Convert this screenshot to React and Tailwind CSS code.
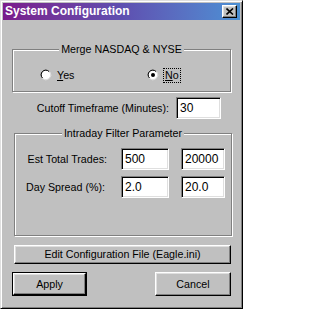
const raised =
  "bg-[#c0c0c0] border border-t-white border-l-white border-r-black border-b-black shadow-[inset_-1px_-1px_0_#808080,inset_1px_1px_0_#dfdfdf]";
const sunken =
  "bg-white border border-t-[#808080] border-l-[#808080] border-r-white border-b-white shadow-[inset_1px_1px_0_#000,inset_-1px_-1px_0_#dfdfdf]";
const etched =
  "relative border border-[#808080] shadow-[inset_1px_1px_0_#fff,1px_1px_0_#fff]";

function Radio({ checked }) {
  return (
    <svg width="12" height="12" viewBox="0 0 12 12" className="shrink-0">
      <path d="M8 1.5A5 5 0 0 0 1.5 8" stroke="#808080" strokeWidth="1" fill="none" />
      <circle cx="6" cy="6" r="4.5" fill="#fff" />
      <path d="M2.5 9.5A5 5 0 0 0 10 3" stroke="#dfdfdf" strokeWidth="1" fill="none" />
      <path d="M9 2.5A4 4 0 0 0 2.5 9" stroke="#000" strokeWidth="1" fill="none" />
      {checked && <circle cx="6" cy="6" r="2" fill="#000" />}
    </svg>
  );
}

function Field({ value, width }) {
  return (
    <div className={`${sunken} h-[22px] pl-[3px] pt-[3px] leading-[14px] text-[12px] ${width}`}>
      {value}
    </div>
  );
}

function Legend({ children }) {
  return (
    <div className="absolute -top-[8px] left-0 right-0 flex justify-center">
      <span className="bg-[#c0c0c0] px-[2px] leading-[14px]">{children}</span>
    </div>
  );
}

export default function App() {
  return (
    <div
      className="w-[243px] h-[309px] bg-[#c0c0c0] text-[10.7px] text-black border border-t-[#dfdfdf] border-l-[#dfdfdf] border-r-black border-b-black shadow-[inset_1px_1px_0_#fff,inset_-1px_-1px_0_#808080] p-[2px] flex flex-col"
      style={{ fontFamily: '"Liberation Sans", Arial, sans-serif' }}
    >
      <div className="h-[17px] flex items-center justify-between bg-gradient-to-r from-[#7a1a8c] via-[#5e4fb0] to-[#4a90d4] pl-[2px] pr-[3px]">
        <span className="text-white font-bold text-[12px] leading-[17px]">
          System Configuration
        </span>
        <div className={`${raised} w-[15px] h-[13px] flex items-center justify-center`}>
          <svg width="8" height="7" viewBox="0 0 8 7">
            <path d="M0.5 0.5L7 6.5M7 0.5L0.5 6.5" stroke="#000" strokeWidth="1.6" />
          </svg>
        </div>
      </div>

      <div className={`${etched} mt-[29px] ml-[9px] w-[219px] h-[43px]`}>
        <Legend>Merge NASDAQ &amp; NYSE</Legend>
        <div className="flex items-center pt-[18px] pl-[27px]">
          <div className="w-[107px] flex items-center">
            <Radio />
            <span className="ml-[5px] leading-[14px]">
              <span className="underline">Y</span>es
            </span>
          </div>
          <Radio checked />
          <span className="ml-[5px] leading-[13px] px-[1px] outline outline-1 outline-dotted outline-black">
            <span className="underline">N</span>o
          </span>
        </div>
      </div>

      <div className="flex items-center mt-[5px]">
        <span className="w-[166px] text-right">Cutoff Timeframe (Minutes):</span>
        <Field value="30" width="ml-[7px] w-[45px] h-[21px]" />
      </div>

      <div className={`${etched} mt-[14px] ml-[11px] w-[218px] h-[103px]`}>
        <Legend>Intraday Filter Parameter</Legend>
        <div className="flex flex-col gap-[6px] pt-[14px]">
          <div className="flex items-center">
            <span className="w-[92px] text-right">Est Total Trades:</span>
            <Field value="500" width="ml-[14px] w-[48px]" />
            <Field value="20000" width="ml-[12px] w-[44px]" />
          </div>
          <div className="flex items-center">
            <span className="w-[90px] text-right">Day Spread (%):</span>
            <Field value="2.0" width="ml-[16px] w-[48px]" />
            <Field value="20.0" width="ml-[12px] w-[44px]" />
          </div>
        </div>
      </div>

      <div
        className={`${raised} mt-[9px] ml-[11px] w-[217px] h-[19px] flex items-center justify-center`}
      >
        Edit Configuration File (Eagle.ini)
      </div>

      <div className="flex justify-between mt-[8px] ml-[9px] w-[219px]">
        <div className="border border-black w-[75px] h-[24px]">
          <div className={`${raised} w-full h-full flex items-center justify-center`}>
            Apply
          </div>
        </div>
        <div className={`${raised} w-[76px] h-[24px] flex items-center justify-center`}>
          Cancel
        </div>
      </div>
    </div>
  );
}
